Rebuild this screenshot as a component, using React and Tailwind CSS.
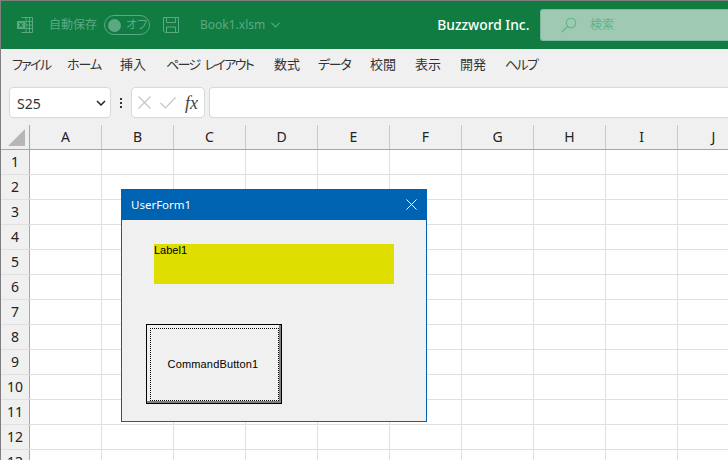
import React from "react";

const ui = "font-['Noto_Sans','Noto_Sans_CJK_JP',sans-serif]";
const cols = ["A", "B", "C", "D", "E", "F", "G", "H", "I", "J"];
const rows = [1, 2, 3, 4, 5, 6, 7, 8, 9, 10, 11, 12, 13];
const menu = [
  ["ファイル", "w-[55px] ml-[11px] tracking-[-1.7px]"],
  ["ホーム", "w-[53px] tracking-[-1px]"],
  ["挿入", "w-[46px]"],
  ["ページ レイアウト", "w-[108px] tracking-[-1.6px] [word-spacing:3px]"],
  ["数式", "w-[44px]"],
  ["データ", "w-[52px] tracking-[-1.300px]"],
  ["校閲", "w-[45px]"],
  ["表示", "w-[45px]"],
  ["開発", "w-[45px]"],
  ["ヘルプ", "w-[50px] tracking-[-1.700px]"],
];

function ExcelIcon() {
  return (
    <svg width="16" height="16" viewBox="0 0 16 16" fill="none" stroke="#5aa982" strokeWidth="1">
      <path d="M4.500.5h11v15h-11M9 .5v15M12.500.5v15M9 4.500h6.500M9 8h6.500M9 11.500h6.500" />
      <rect x="0" y="4" width="8" height="8" fill="#5aa982" stroke="none" />
      <path d="M2.300 5.800l3.400 4.400M5.700 5.800l-3.400 4.400" stroke="#107c41" strokeWidth="1.100" />
    </svg>
  );
}

function SaveIcon() {
  return (
    <svg width="16" height="16" viewBox="0 0 16 16" fill="none" stroke="#5aa982" strokeWidth="1">
      <path d="M.5.5h15v15H2l-1.500-1.500z" />
      <path d="M3.500.5v5h9v-5M3.500 15.500v-5.500h9v5.500" />
    </svg>
  );
}

function SearchIcon() {
  return (
    <svg width="16" height="16" viewBox="0 0 16 16" fill="none" stroke="#5fb48a" strokeWidth="1.100">
      <circle cx="10" cy="6" r="4.700" />
      <path d="M6.500 9.500L1 15" />
    </svg>
  );
}

export default function App() {
  return (
    <div className={`relative w-[728px] h-[460px] overflow-hidden bg-white border-l border-t border-[#7f7f7f] ${ui}`}>
      <header className="flex items-center h-[48px] bg-[#107c41] text-[#5aa982]">
        <div className="ml-[16px] w-[32px]"><ExcelIcon /></div>
        <span className="text-[12px] w-[49px] whitespace-nowrap">自動保存</span>
        <div className="ml-[6px] flex items-center w-[46px] h-[20px] rounded-full border border-[#5aa982]">
          <span className="ml-[3px] size-[13px] rounded-full bg-[#5aa982]" />
          <span className="ml-[5px] text-[12px] leading-none whitespace-nowrap [font-feature-settings:'palt']">オフ</span>
        </div>
        <div className="ml-[13px]"><SaveIcon /></div>
        <span className="ml-[21px] text-[12px] whitespace-nowrap">Book1.xlsm</span>
        <svg className="ml-[6px]" width="9" height="6" viewBox="0 0 9 6" fill="none" stroke="#5aa982" strokeWidth="1.200"><path d="M.5.800l4 4 4-4" /></svg>
        <span className="ml-[157px] text-[13.8px] font-medium text-white whitespace-nowrap w-[101px]">Buzzword Inc.</span>
        <div className="flex items-center ml-auto w-[188px] h-[32px] bg-[#9fc9b2] rounded-l-[3px] border-y border-l border-[#7fb89a] text-[#5fb48a]">
          <span className="ml-[20px]"><SearchIcon /></span>
          <span className="ml-[13px] text-[12px]">検索</span>
        </div>
      </header>

      <nav className="flex items-center h-[32px] bg-[#f0f0f0] text-[13px] text-[#333] [font-feature-settings:'palt']">
        {menu.map(([t, c]) => (
          <span key={t} className={`whitespace-nowrap ${c}`}>{t}</span>
        ))}
      </nav>

      <div className="flex items-center h-[44px] pb-[1px] bg-[#f0f0f0]">
        <div className="ml-[8px] flex items-center justify-between w-[102px] h-[31px] bg-white rounded-[4px] border border-[#d9d9d9] pl-[7px] pr-[4px] text-[14px] text-[#333]">
          <span className="pt-[1px]">S25</span>
          <svg width="10" height="6" viewBox="0 0 10 6" fill="none" stroke="#222" strokeWidth="1.500"><path d="M1 1l4 4 4-4" /></svg>
        </div>
        <div className="w-[20px] flex flex-col items-center gap-[2px]">
          <span className="size-[2px] bg-[#333]" />
          <span className="size-[2px] bg-[#333]" />
          <span className="size-[2px] bg-[#333]" />
        </div>
        <div className="flex items-center w-[74px] h-[31px] bg-white rounded-[4px] border border-[#d9d9d9]">
          <svg className="ml-[6px]" width="13" height="13" viewBox="0 0 13 13" stroke="#c4c4c4" strokeWidth="1.100" fill="none"><path d="M.5.500l12 12M12.500.500l-12 12" /></svg>
          <svg className="ml-[9px]" width="16" height="12" viewBox="0 0 16 12" stroke="#c4c4c4" strokeWidth="1.100" fill="none"><path d="M.5 6l5 5L15.500.500" /></svg>
          <span className="ml-[9px] text-[18px] leading-none italic text-[#444] font-['Liberation_Serif',serif]">fx</span>
        </div>
        <div className="ml-[4px] flex-1 h-[31px] bg-white rounded-l-[4px] border border-r-0 border-[#d9d9d9]" />
      </div>

      <div className="flex h-[25px] bg-[#f0f0f0] border-b border-[#a6a6a6] text-[14px] text-[#222]">
        <div className="relative w-[29px] border-r border-[#a6a6a6] shrink-0">
          <span className="absolute right-[4px] bottom-[3px] w-0 h-0 border-l-[17px] border-b-[17px] border-l-transparent border-b-[#b7b7b7]" />
        </div>
        {cols.map((c) => (
          <div key={c} className="flex items-center justify-center w-[72px] shrink-0 pb-[1px] border-r border-[#c8c8c8]">{c}</div>
        ))}
      </div>

      {rows.map((r) => (
        <div key={r} className="flex h-[25px] border-b border-[#e0e0e0]">
          <div className="flex items-center justify-center w-[29px] shrink-0 pb-[1px] bg-[#f0f0f0] border-r border-[#a6a6a6] text-[14px] text-[#222]">{r}</div>
          {cols.map((c) => (
            <div key={c} className="w-[72px] shrink-0 border-r border-[#e0e0e0]" />
          ))}
        </div>
      ))}

      {/* floating UserForm window */}
      <div className="absolute left-[120px] top-[188px] w-[306px] h-[233px] flex flex-col bg-[#f0f0f0] border border-[#0063b1]">
        <div className="flex items-center justify-between h-[30px] shrink-0 bg-[#0063b1] pl-[9px] pr-[9px] text-white text-[11.5px]">
          <span>UserForm1</span>
          <svg className="mb-[1px]" width="11" height="11" viewBox="0 0 11 11" stroke="#fff" strokeWidth="1" fill="none"><path d="M.5.500l10 10M10.500.500l-10 10" /></svg>
        </div>
        <div className="flex flex-col items-start">
          <div className="ml-[32px] mt-[24px] w-[240px] h-[40px] bg-[#dede00] text-[11px] leading-[12px] text-black font-['Liberation_Sans',sans-serif]">Label1</div>
          <div className="ml-[24px] mt-[40px] w-[136px] h-[80px] border border-black bg-[#f0f0f0]">
            <div className="w-full h-full border-r-2 border-b-2 border-[#808080] pl-[3px] pt-[3px]">
              <div className="flex items-center justify-center w-full h-full pr-[3px] border border-dotted border-black text-[11px] tracking-[0.15px] text-black font-['Liberation_Sans',sans-serif]">CommandButton1</div>
            </div>
          </div>
        </div>
      </div>
    </div>
  );
}
